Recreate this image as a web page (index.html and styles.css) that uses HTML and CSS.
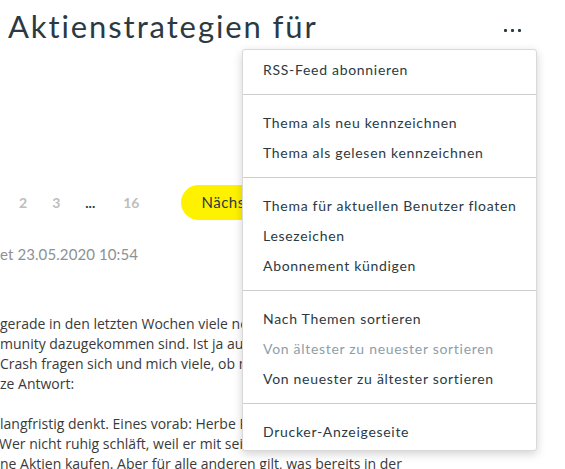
FILE: index.html
```html
<!DOCTYPE html>
<html lang="de">
<head>
<meta charset="utf-8">
<link rel="stylesheet" href="styles.css">
</head>
<body>
<div class="page">
  <header class="topic-head">
    <h1 class="title">Aktienstrategien für</h1>
    <button class="more" aria-label="Mehr"><span></span><span></span><span></span></button>
  </header>

  <nav class="pager">
    <span class="pg">2</span>
    <span class="pg">3</span>
    <span class="pg dots">...</span>
    <span class="pg">16</span>
    <span class="next">Nächste</span>
  </nav>

  <div class="date">et 23.05.2020 10:54</div>

  <div class="post">
    <p>
      <span class="ln">gerade in den letzten Wochen viele neue Mitglieder</span>
      <span class="ln">munity dazugekommen sind. Ist ja auch kein Wunder</span>
      <span class="ln">Crash fragen sich und mich viele, ob man jetzt</span>
      <span class="ln">ze Antwort:</span>
    </p>
    <p>
      <span class="ln">langfristig denkt. Eines vorab: Herbe Rückschläge</span>
      <span class="ln ln-w">Wer nicht ruhig schläft, weil er mit seinem Geld</span>
      <span class="ln">ne Aktien kaufen. Aber für alle anderen gilt, was bereits in der</span>
    </p>
  </div>

  <div class="menu">
    <ul class="sec">
      <li>RSS-Feed abonnieren</li>
    </ul>
    <ul class="sec">
      <li>Thema als neu kennzeichnen</li>
      <li>Thema als gelesen kennzeichnen</li>
    </ul>
    <ul class="sec">
      <li>Thema für aktuellen Benutzer floaten</li>
      <li>Lesezeichen</li>
      <li>Abonnement kündigen</li>
    </ul>
    <ul class="sec">
      <li>Nach Themen sortieren</li>
      <li class="disabled">Von ältester zu neuester sortieren</li>
      <li>Von neuester zu ältester sortieren</li>
    </ul>
    <ul class="sec last">
      <li>Drucker-Anzeigeseite</li>
    </ul>
  </div>
</div>
</body>
</html>
```

FILE: styles.css
```css
html, body {
  margin: 0;
  padding: 0;
  background: #fff;
  overflow: hidden;
}
.page {
  position: relative;
  width: 565px;
  height: 469px;
  overflow: hidden;
  font-family: Lato, "Noto Sans", sans-serif;
  color: #2b3a42;
}
.topic-head {
  display: flex;
  align-items: center;
  justify-content: space-between;
  padding: 8px 44px 0 8px;
  height: 44px;
  box-sizing: border-box;
}
.title {
  margin: 0;
  font-weight: 400;
  font-size: 31px;
  line-height: 36px;
  letter-spacing: 1.9px;
  color: #2b3a42;
}
.more {
  display: flex;
  gap: 4px;
  border: 0;
  background: none;
  padding: 0;
  margin-top: 9px;
}
.more span {
  width: 3px;
  height: 3px;
  background: #2b3a42;
  border-radius: 1px;
}
.pager {
  display: flex;
  align-items: center;
  margin-top: 140px;
  padding-left: 19px;
  height: 36px;
  font-weight: 700;
  font-size: 14px;
}
.pg {
  color: #bdbdbd;
  margin-right: 25px;
}
.pg.dots {
  color: #2b3a42;
  margin-right: 28px;
}
.next {
  margin-left: 17px;
  background: #fff200;
  color: #2b3a42;
  font-weight: 400;
  font-size: 15px;
  letter-spacing: 0.5px;
  height: 35px;
  line-height: 35px;
  padding: 0 20px;
  border-radius: 18px;
}
.date {
  margin-top: 24px;
  font-size: 15px;
  letter-spacing: 0.1px;
  color: #8c9196;
  line-height: 20px;
}
.post {
  margin-top: 50px;
  font-family: "Open Sans", sans-serif;
  font-size: 14px;
  line-height: 20px;
  color: #3a3a3a;
  white-space: nowrap;
}
.post p {
  margin: 0 0 20px;
}
.ln {
  display: block;
}
.ln-w {
  text-indent: -1px;
}
.menu {
  position: absolute;
  left: 242px;
  top: 49px;
  width: 295px;
  box-sizing: border-box;
  background: #fff;
  border: 1px solid #d9d9d9;
  border-radius: 3px;
  box-shadow: 0 3px 10px rgba(0, 0, 0, 0.18);
  padding: 5px 0 3px;
  font-size: 14px;
  letter-spacing: 0.7px;
  color: #2b3a42;
}
.sec {
  list-style: none;
  margin: 0;
  padding: 0 0 9px;
  border-bottom: 1px solid #cccccc;
  margin-bottom: 13px;
}
.sec.last {
  border-bottom: 0;
  padding-bottom: 0;
  margin-bottom: 0;
}
.sec li {
  height: 30px;
  line-height: 30px;
  padding-left: 20px;
  white-space: nowrap;
}
.sec li.disabled {
  color: #8e9ea8;
}
```
